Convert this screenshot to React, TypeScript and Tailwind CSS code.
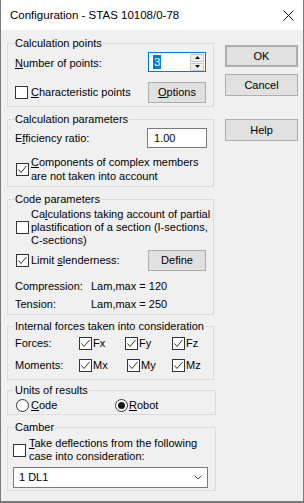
import React from "react";

function Check({ checked }: { checked?: boolean }) {
  return (
    <span className="w-[13px] h-[13px] border border-[#333333] bg-white shrink-0 flex items-center justify-center">
      {checked && (
        <svg width="11" height="11" viewBox="0 0 11 11">
          <polyline points="1.5,5.5 4,8.5 9.5,2" fill="none" stroke="#333333" strokeWidth="1" />
        </svg>
      )}
    </span>
  );
}

function Radio({ checked }: { checked?: boolean }) {
  return (
    <span className="w-[13px] h-[13px] rounded-full border border-[#333333] bg-white shrink-0 flex items-center justify-center">
      {checked && <span className="w-[7px] h-[7px] rounded-full bg-[#1a1a1a]" />}
    </span>
  );
}

function Group({ title, className, children }: { title: string; className?: string; children: React.ReactNode }) {
  return (
    <div className={`border border-[#dcdcdc] ${className ?? ""}`}>
      <div className="-mt-[7px] ml-[6px] px-[1px] w-fit bg-[#f0f0f0] leading-[13px] h-[13px] whitespace-nowrap">{title}</div>
      {children}
    </div>
  );
}

function Btn({ children, className }: { children: React.ReactNode; className?: string }) {
  return (
    <div className={`bg-[#e1e1e1] border border-[#adadad] flex items-center justify-center leading-[13px] ${className ?? ""}`}>
      {children}
    </div>
  );
}

export default function App() {
  return (
    <div className="w-[304px] h-[503px] border-x border-b-2 border-[#7a7a7a] bg-[#f0f0f0] text-black text-[11px] font-['Liberation_Sans',Arial,sans-serif] flex flex-col overflow-hidden">
      {/* Title bar */}
      <div className="h-[30px] bg-white flex items-center justify-between pl-[9px] pr-[9px] shrink-0">
        <span className="text-[11.5px] leading-[14px] whitespace-nowrap">Configuration - STAS 10108/0-78</span>
        <svg width="11" height="11" viewBox="0 0 11 11">
          <line x1="0.5" y1="0.5" x2="10.5" y2="10.5" stroke="#111" strokeWidth="1" />
          <line x1="10.5" y1="0.5" x2="0.5" y2="10.5" stroke="#111" strokeWidth="1" />
        </svg>
      </div>

      {/* Body */}
      <div className="flex pl-[6px]">
        {/* Left column */}
        <div className="w-[209px] flex flex-col">
          {/* Calculation points */}
          <Group title="Calculation points" className="mt-[13px] w-[207px] pb-[3px]">
            <div className="mt-[2px] h-[20px] flex items-start pl-[7px] pr-[7px]">
              <span className="mt-[5px] leading-[13px]">
                <u>N</u>umber of points:
              </span>
              <div className="ml-auto w-[58px] h-[20px] border border-[#0078d7] bg-white flex items-center">
                <span className="ml-[4px] px-[1px] h-[14px] bg-[#0078d7] text-white leading-[14px] text-[11.5px]">3</span>
                <div className="ml-auto mr-[1px] w-[14px] h-[17px] flex flex-col gap-[1px]">
                  <div className="h-[8px] bg-[#f0f0f0] border border-[#c8c8c8] flex items-center justify-center">
                    <svg width="5" height="3" viewBox="0 0 5 3"><polygon points="2.5,0 5,3 0,3" fill="#111" /></svg>
                  </div>
                  <div className="h-[8px] bg-[#f0f0f0] border border-[#c8c8c8] flex items-center justify-center">
                    <svg width="5" height="3" viewBox="0 0 5 3"><polygon points="0,0 5,0 2.5,3" fill="#111" /></svg>
                  </div>
                </div>
              </div>
            </div>
            <div className="mt-[10px] h-[21px] flex items-center pl-[7px] pr-[7px]">
              <Check />
              <span className="ml-[3px] leading-[13px]">
                <u>C</u>haracteristic points
              </span>
              <Btn className="ml-auto w-[58px] h-[21px]">
                <span>
                  <u>O</u>ptions
                </span>
              </Btn>
            </div>
          </Group>

          {/* Calculation parameters */}
          <Group title="Calculation parameters" className="mt-[12px] w-[207px] pb-[3px]">
            <div className="mt-[2px] h-[20px] flex items-start pl-[7px] pr-[6px]">
              <span className="mt-[4px] leading-[13px]">
                E<u>f</u>ficiency ratio:
              </span>
              <div className="ml-auto w-[60px] h-[20px] border border-[#7a7a7a] bg-white flex items-center pl-[6px] leading-[13px]">
                1.00
              </div>
            </div>
            <div className="mt-[7px] flex items-center pl-[8px]">
              <Check checked />
              <span className="ml-[2px] leading-[14px]">
                <u>C</u>omponents of complex members
                <br />
                are not taken into account
              </span>
            </div>
          </Group>

          {/* Code parameters */}
          <Group title="Code parameters" className="mt-[12px] w-[207px] pb-[3px]">
            <div className="mt-[2px] flex items-center pl-[8px]">
              <Check />
              <span className="ml-[2px] leading-[13px]">
                Ca<u>l</u>culations taking account of partial
                <br />
                plastification of a section (I-sections,
                <br />
                C-sections)
              </span>
            </div>
            <div className="mt-[3px] h-[21px] flex items-center pl-[8px] pr-[7px]">
              <Check checked />
              <span className="ml-[2px] leading-[13px]">
                Limit <u>s</u>lenderness:
              </span>
              <Btn className="ml-auto w-[58px] h-[21px]">Define</Btn>
            </div>
            <div className="mt-[9px] flex pl-[7px] leading-[13px]">
              <span className="w-[76px]">Compression:</span>
              <span>Lam,max = 120</span>
            </div>
            <div className="mt-[5px] flex pl-[7px] leading-[13px]">
              <span className="w-[76px]">Tension:</span>
              <span>Lam,max = 250</span>
            </div>
          </Group>

          {/* Internal forces */}
          <Group title="Internal forces taken into consideration" className="mt-[11px] w-[207px] pb-[7px]">
            <div className="mt-[4px] h-[13px] flex items-center pl-[7px] leading-[13px]">
              <span className="w-[64px]">Forces:</span>
              <div className="w-[46px] flex items-center">
                <Check checked />
                <span className="ml-[1px]">Fx</span>
              </div>
              <div className="w-[47px] flex items-center">
                <Check checked />
                <span className="ml-[1px]">Fy</span>
              </div>
              <div className="flex items-center">
                <Check checked />
                <span className="ml-[1px]">Fz</span>
              </div>
            </div>
            <div className="mt-[9px] h-[13px] flex items-center pl-[7px] leading-[13px]">
              <span className="w-[64px]">Moments:</span>
              <div className="w-[48px] flex items-center">
                <Check checked />
                <span className="ml-[1px]">Mx</span>
              </div>
              <div className="w-[45px] flex items-center">
                <Check checked />
                <span className="ml-[1px]">My</span>
              </div>
              <div className="flex items-center">
                <Check checked />
                <span className="ml-[1px]">Mz</span>
              </div>
            </div>
          </Group>

          {/* Units of results */}
          <Group title="Units of results" className="mt-[10px] w-[209px] pb-[2px]">
            <div className="mt-[2px] h-[13px] flex items-center pl-[8px] leading-[13px]">
              <div className="w-[99px] flex items-center">
                <Radio />
                <span className="ml-[2px]">
                  <u>C</u>ode
                </span>
              </div>
              <div className="flex items-center">
                <Radio checked />
                <span className="ml-[1px]">
                  <u>R</u>obot
                </span>
              </div>
            </div>
          </Group>

          {/* Camber */}
          <Group title="Camber" className="mt-[12px] w-[209px] pb-[2px]">
            <div className="mt-[3px] flex items-center pl-[5px]">
              <Check />
              <span className="ml-[3px] leading-[13px]">
                <u>T</u>ake deflections from the following
                <br />
                case into consideration:
              </span>
            </div>
            <div className="mt-[4px] ml-[5px] w-[195px] h-[21px] border border-[#7a7a7a] bg-white flex items-center pl-[5px] pr-[5px] leading-[13px]">
              <span>1 DL1</span>
              <svg className="ml-auto" width="8" height="5" viewBox="0 0 8 5">
                <polyline points="0.5,0.5 4,4 7.5,0.5" fill="none" stroke="#444" strokeWidth="1" />
              </svg>
            </div>
          </Group>
        </div>

        {/* Right column */}
        <div className="ml-[9px] w-[73px] flex flex-col pt-[15px]">
          <Btn className="h-[22px] border-2 border-[#0078d7]">OK</Btn>
          <Btn className="mt-[7px] h-[22px]">Cancel</Btn>
          <Btn className="mt-[23px] h-[22px]">Help</Btn>
        </div>
      </div>
    </div>
  );
}
